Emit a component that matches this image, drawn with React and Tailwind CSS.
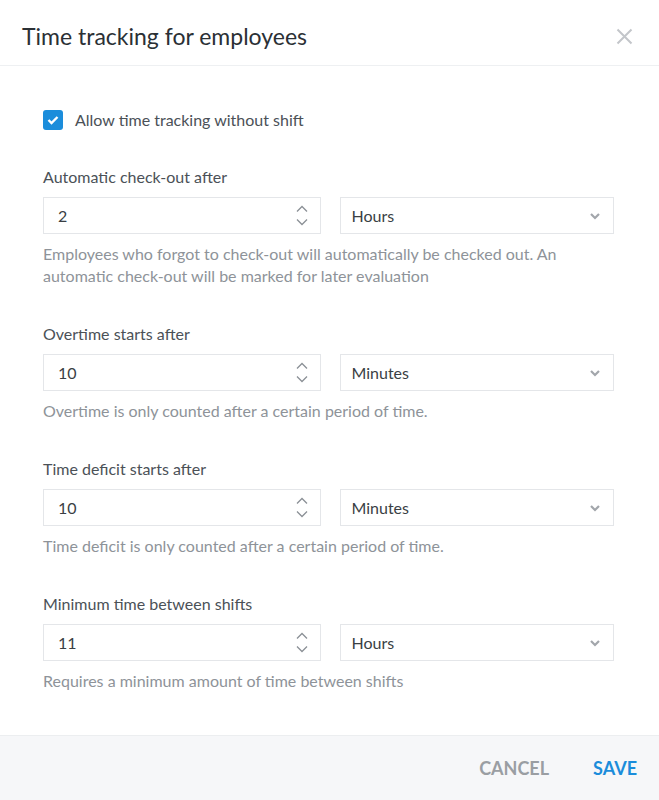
import React from "react";

const font = { fontFamily: "Lato, 'Open Sans', sans-serif" };

function NumberInput({ value }) {
  return (
    <div className="flex-1 h-[37px] border border-[#e4e6e9] flex items-center justify-between pl-[14px] pr-[12px]">
      <span className="text-[16px] text-[#3a3f44]">{value}</span>
      <div className="flex flex-col items-center gap-[5px]">
        <svg width="12" height="8" viewBox="0 0 12 8" fill="none">
          <path d="M1 6.5 L6 1.5 L11 6.5" stroke="#8b9096" strokeWidth="1.3" />
        </svg>
        <svg width="12" height="8" viewBox="0 0 12 8" fill="none">
          <path d="M1 1.5 L6 6.5 L11 1.5" stroke="#8b9096" strokeWidth="1.3" />
        </svg>
      </div>
    </div>
  );
}

function Select({ value }) {
  return (
    <div className="flex-1 h-[37px] border border-[#e4e6e9] flex items-center justify-between pl-[11px] pr-[12px]">
      <span className="text-[16px] text-[#3a3f44]">{value}</span>
      <svg width="12" height="8" viewBox="0 0 12 8" fill="none">
        <path d="M2 2 L6 6 L10 2" stroke="#a2a6ab" strokeWidth="2.2" />
      </svg>
    </div>
  );
}

function Section({ label, value, unit, help }) {
  return (
    <div className="flex flex-col">
      <div className="text-[16px] leading-[22px] text-[#4b5157]">{label}</div>
      <div className="flex gap-[19px] mt-[9px]">
        <NumberInput value={value} />
        <Select value={unit} />
      </div>
      <div className="text-[16px] leading-[22px] text-[#8e9399] mt-[9px]">{help}</div>
    </div>
  );
}

export default function App() {
  return (
    <div className="w-[659px] h-[800px] bg-white flex flex-col" style={font}>
      <div className="h-[66px] border-b border-[#eef0f2] flex items-center justify-between pl-[22px] pr-[26px] pt-[8px]">
        <div className="text-[23px] text-[#2b3035]">Time tracking for employees</div>
        <svg width="17" height="17" viewBox="0 0 17 17" fill="none">
          <path d="M1.5 1.5 L15.5 15.5 M15.5 1.5 L1.5 15.5" stroke="#c3c6ca" strokeWidth="2" />
        </svg>
      </div>
      <div className="flex-1 pl-[43px] pr-[45px] pt-[44px] flex flex-col gap-[36px]">
        <div className="flex items-center gap-[12px] h-[20px]">
          <div className="w-[20px] h-[20px] rounded-[3px] bg-[#1b8ddb] flex items-center justify-center">
            <svg width="12" height="10" viewBox="0 0 12 10" fill="none">
              <path d="M1.5 5 L4.5 8 L10.5 2" stroke="white" strokeWidth="2.4" />
            </svg>
          </div>
          <span className="text-[16px] text-[#4b5157]">Allow time tracking without shift</span>
        </div>
        <Section
          label="Automatic check-out after"
          value="2"
          unit="Hours"
          help="Employees who forgot to check-out will automatically be checked out. An automatic check-out will be marked for later evaluation"
        />
        <Section
          label="Overtime starts after"
          value="10"
          unit="Minutes"
          help="Overtime is only counted after a certain period of time."
        />
        <Section
          label="Time deficit starts after"
          value="10"
          unit="Minutes"
          help="Time deficit is only counted after a certain period of time."
        />
        <Section
          label="Minimum time between shifts"
          value="11"
          unit="Hours"
          help="Requires a minimum amount of time between shifts"
        />
      </div>
      <div className="h-[65px] bg-[#f6f7f9] border-t border-[#eceef0] flex items-center justify-end pr-[22px] gap-[44px]">
        <span className="text-[18px] font-bold text-[#9a9ea3]">CANCEL</span>
        <span className="text-[18px] font-bold text-[#1b8ddb]">SAVE</span>
      </div>
    </div>
  );
}
